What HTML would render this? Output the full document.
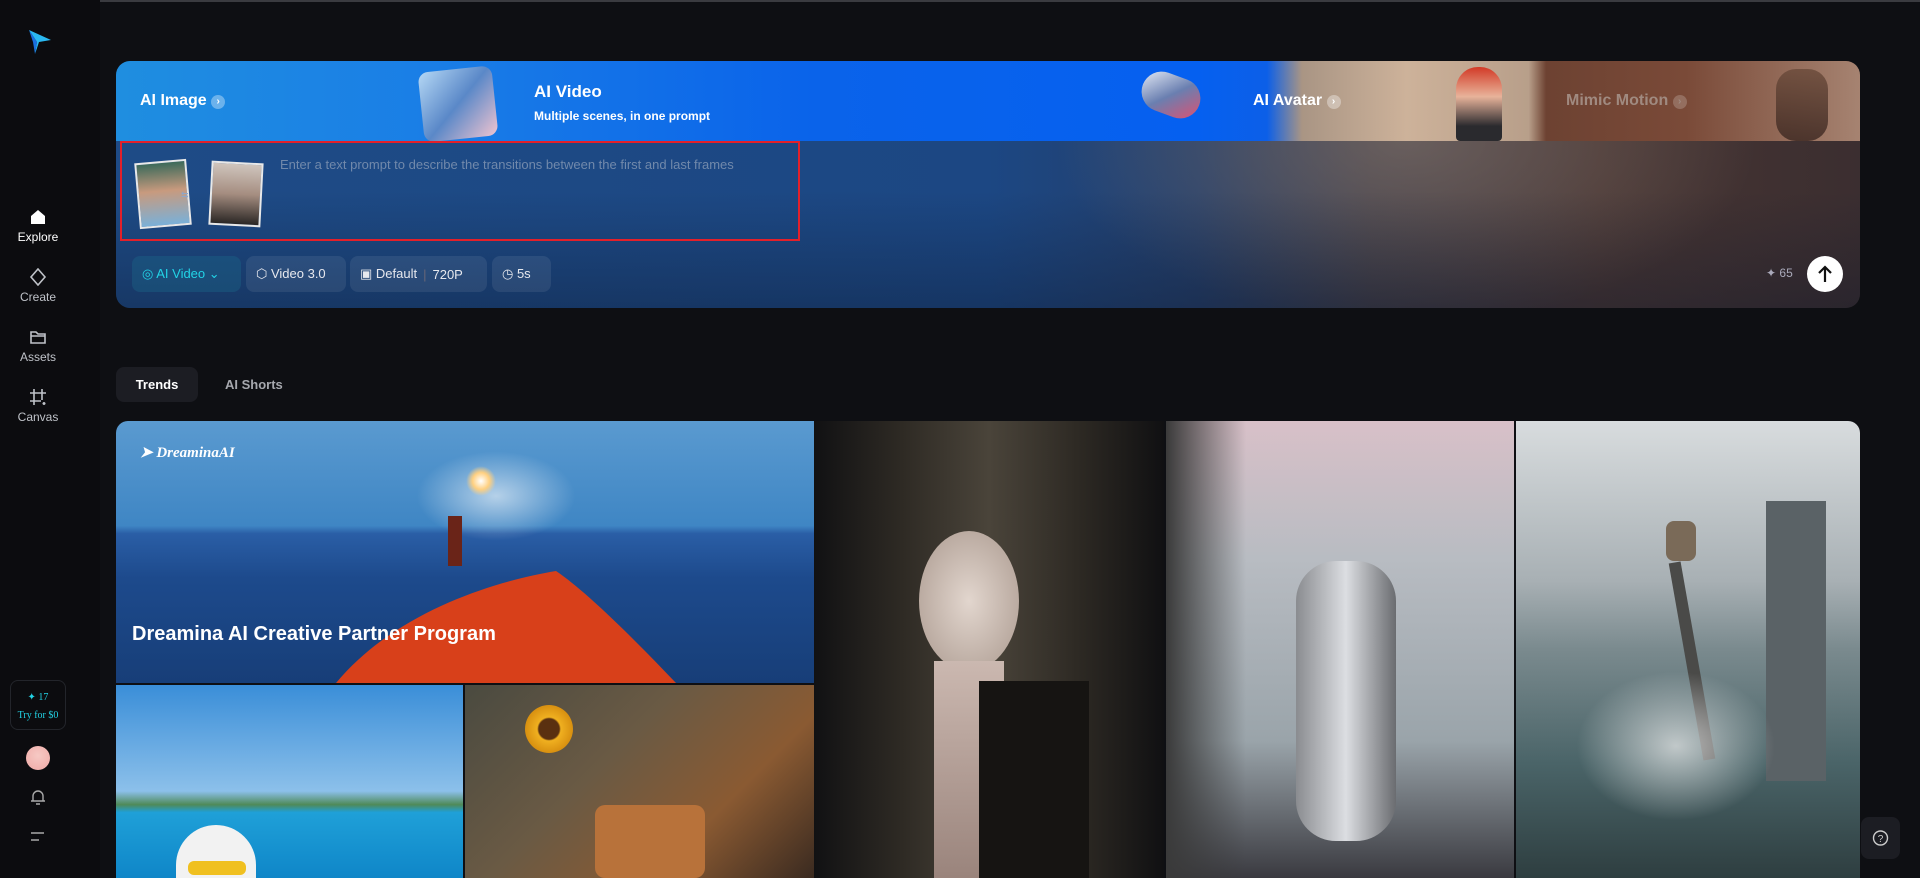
<!DOCTYPE html>
<html><head><meta charset="utf-8">
<style>
*{margin:0;padding:0;box-sizing:border-box}
body{width:1920px;height:878px;overflow:hidden;background:#0e0f13;font-family:"Liberation Sans",sans-serif;color:#fff;position:relative}
.abs{position:absolute}
.side{left:0;top:0;width:100px;height:878px;background:#0c0c0f}
.nav{position:absolute;left:0;width:76px;text-align:center;font-size:12px;color:#bfc2c8}
.nav svg{display:block;margin:0 auto 4px}
.card{left:116px;top:61px;width:1744px;height:247px;border-radius:14px;overflow:hidden}
.pill{position:absolute;top:256px;height:36px;border-radius:8px;background:rgba(255,255,255,.08);font-size:13px;color:#e6e8ee;display:flex;align-items:center;padding:0 10px;gap:6px}
.tile{position:absolute;overflow:hidden}
</style></head><body>
<div class="abs" style="left:0;top:0;width:1920px;height:2px;background:#3a3b40"></div>
<div class="abs side"></div>
<svg class="abs" style="left:27px;top:28px" width="26" height="28" viewBox="0 0 26 28"><path d="M2 2 L24 12 L12 14 L8 26 L10 14 Z" fill="#2ab8f0"/><path d="M2 2 L10 14 L8 26 L6 14Z" fill="#1a6fe0"/></svg>
<div class="nav" style="top:208px;color:#fff"><svg width="18" height="18" viewBox="0 0 18 18"><path d="M2 8 L9 2 L16 8 V16 H2Z" fill="#fff"/></svg>Explore</div>
<div class="nav" style="top:268px"><svg width="18" height="18" viewBox="0 0 18 18"><path d="M9 1 L16 9 L9 17 L2 9Z" fill="none" stroke="#bfc2c8" stroke-width="1.6"/></svg>Create</div>
<div class="nav" style="top:328px"><svg width="18" height="18" viewBox="0 0 18 18"><path d="M2 4 H7 L9 6 H16 V15 H2Z M2 8 H16" fill="none" stroke="#bfc2c8" stroke-width="1.6"/></svg>Assets</div>
<div class="nav" style="top:388px"><svg width="18" height="18" viewBox="0 0 18 18"><path d="M5 1 V17 M13 1 V12 M1 5 H17 M1 13 H12 M15 14 V17 M13.5 15.5 H16.5" fill="none" stroke="#bfc2c8" stroke-width="1.6"/></svg>Canvas</div>
<div class="abs" style="left:10px;top:680px;width:56px;height:50px;border:1px solid #23252b;border-radius:8px;text-align:center;font-family:'Liberation Serif',serif;font-size:10px;color:#22d3e6;padding-top:8px;line-height:18px">✦ 17<br>Try for $0</div>
<div class="abs" style="left:26px;top:746px;width:24px;height:24px;border-radius:50%;background:radial-gradient(circle at 50% 40%,#f6c9c4,#f0a9a6)"></div>
<svg class="abs" style="left:29px;top:788px" width="18" height="18" viewBox="0 0 18 18"><path d="M4 13 V8 A5 5 0 0 1 14 8 V13 Z M2 13 H16 M7 16 H11" fill="none" stroke="#aaa" stroke-width="1.4"/></svg>
<svg class="abs" style="left:30px;top:830px" width="16" height="14" viewBox="0 0 16 14"><path d="M1 3 H14 M1 10 H9" stroke="#aaa" stroke-width="1.6"/></svg>

<div class="abs card">
 <div class="abs" style="left:0;top:0;width:1744px;height:80px;background:linear-gradient(90deg,#1f8ee0 0%,#1a7ee6 18%,#0a63ea 40%,#0560f0 62%,#0c5fe8 66%,#a99584 68%,#cdb29a 74%,#b89f8a 81%,#6d4232 82%,#7a4a38 90%,#a68371 100%)"></div>
 <div class="abs" style="left:305px;top:8px;width:74px;height:70px;border-radius:10px;background:linear-gradient(135deg,#b5d8f5,#5a88c8,#f0c4d0);transform:rotate(-6deg)"></div>
 <div class="abs" style="left:1025px;top:14px;width:60px;height:40px;background:linear-gradient(135deg,#e8eef8,#6a7fb0,#e05070);border-radius:20px;transform:rotate(20deg)"></div>
 <div class="abs" style="left:1340px;top:6px;width:46px;height:74px;border-radius:22px 22px 4px 4px;background:linear-gradient(180deg,#d23a26 0%,#e8b39a 40%,#2a2a2e 80%)"></div>
 <div class="abs" style="left:1660px;top:8px;width:52px;height:72px;border-radius:20px;background:linear-gradient(180deg,#6a4a3a,#3a2620);opacity:.8"></div>
 <div class="abs" style="left:24px;top:20px;font-size:16px;font-weight:bold;line-height:40px">AI Image <span style="display:inline-block;width:14px;height:14px;border-radius:50%;background:rgba(255,255,255,.35);font-size:10px;line-height:14px;text-align:center;vertical-align:1px">›</span></div>
 <div class="abs" style="left:418px;top:21px;font-size:17px;font-weight:bold">AI Video</div>
 <div class="abs" style="left:418px;top:48px;font-size:12px;font-weight:bold">Multiple scenes, in one prompt</div>
 <div class="abs" style="left:1137px;top:20px;font-size:16px;font-weight:bold;line-height:40px">AI Avatar <span style="display:inline-block;width:14px;height:14px;border-radius:50%;background:rgba(255,255,255,.35);font-size:10px;line-height:14px;text-align:center;vertical-align:1px">›</span></div>
 <div class="abs" style="left:1450px;top:20px;font-size:16px;font-weight:bold;line-height:40px;color:#a08a80">Mimic Motion <span style="display:inline-block;width:14px;height:14px;border-radius:50%;background:rgba(255,255,255,.2);font-size:10px;line-height:14px;text-align:center;vertical-align:1px">›</span></div>
 <div class="abs" style="left:0;top:80px;width:1744px;height:167px;background:radial-gradient(ellipse 500px 260px at 1290px 0,rgba(140,125,115,.55),rgba(0,0,0,0) 70%),linear-gradient(90deg,#1e4b86 0%,#1c4783 50%,#253f6a 62%,#3d3a45 72%,#473533 85%,#3b2e30 100%)"></div>
 <div class="abs" style="left:0;top:80px;width:1744px;height:167px;background:linear-gradient(180deg,rgba(0,0,0,0) 30%,rgba(10,20,40,.35))"></div>
</div>
<div class="abs" style="left:120px;top:141px;width:680px;height:100px;border:2px solid #e3202a"></div>
<div class="abs" style="left:137px;top:161px;width:52px;height:66px;border:2px solid #e8e8e8;background:linear-gradient(180deg,#3c6a5a,#c89a7e 45%,#7ab0d8);transform:rotate(-5deg)"></div>
<div class="abs" style="left:181px;top:190px;font-size:9px;color:#8fa6c8">⇆</div>
<div class="abs" style="left:210px;top:162px;width:52px;height:64px;border:2px solid #e8e8e8;background:linear-gradient(180deg,#cfc5bd,#a58d80 50%,#2a2624);transform:rotate(3deg)"></div>
<div class="abs" style="left:280px;top:157px;font-size:13px;color:#7189ab">Enter a text prompt to describe the transitions between the first and last frames</div>

<div class="pill" style="left:132px;width:109px;background:rgba(30,110,140,.35);color:#22d3e6">◎ AI Video ⌄</div>
<div class="pill" style="left:246px;width:100px">⬡ Video 3.0</div>
<div class="pill" style="left:350px;width:137px">▣ Default <span style="color:#667">|</span> 720P</div>
<div class="pill" style="left:492px;width:59px">◷ 5s</div>
<div class="abs" style="left:1766px;top:266px;font-size:12px;color:#aab">✦ 65</div>
<div class="abs" style="left:1807px;top:256px;width:36px;height:36px;border-radius:50%;background:#fff"><svg width="36" height="36" viewBox="0 0 36 36"><path d="M18 26 V11 M12 17 L18 11 L24 17" fill="none" stroke="#111" stroke-width="2.2"/></svg></div>

<div class="abs" style="left:116px;top:367px;width:82px;height:35px;border-radius:8px;background:#1c1d23;font-size:13px;font-weight:bold;line-height:35px;text-align:center">Trends</div>
<div class="abs" style="left:225px;top:367px;font-size:13px;font-weight:bold;line-height:35px;color:#a6a8ae">AI Shorts</div>

<div class="tile" style="left:116px;top:421px;width:698px;height:262px;border-radius:12px 0 0 0;background:linear-gradient(180deg,#5a9ad0 0%,#3f86c4 40%,#2a5ea6 43%,#1d4a8c 60%,#173e78 100%)">
 <div class="abs" style="left:300px;top:30px;width:160px;height:90px;background:radial-gradient(ellipse,rgba(255,255,255,.6),rgba(255,255,255,0) 70%)"></div>
 <div class="abs" style="left:350px;top:45px;width:30px;height:30px;background:radial-gradient(circle,#fff,#ffd080 40%,rgba(255,200,100,0) 70%)"></div>
 <div class="abs" style="left:332px;top:95px;width:14px;height:50px;background:#6a2418"></div>
 <svg class="abs" style="left:0;top:0" width="698" height="262"><path d="M220 262 C280 190 380 160 440 150 C470 170 520 220 560 262Z" fill="#d8401a"/></svg>
 <div class="abs" style="left:24px;top:22px;font-family:'Liberation Serif',serif;font-style:italic;font-weight:bold;font-size:15px">➤ DreaminaAI</div>
 <div class="abs" style="left:16px;top:202px;font-size:20px;font-weight:bold">Dreamina AI Creative Partner Program</div>
</div>
<div class="tile" style="left:116px;top:685px;width:347px;height:193px;background:linear-gradient(180deg,#3a8ed8 0%,#8cc0ea 55%,#4f8a58 62%,#1fa0d8 66%,#0f86c8 100%)">
 <div class="abs" style="left:60px;top:140px;width:80px;height:60px;border-radius:40px 40px 0 0;background:#f2f2f2"></div>
 <div class="abs" style="left:72px;top:176px;width:58px;height:14px;background:#f0c020;border-radius:6px"></div>
</div>
<div class="tile" style="left:465px;top:685px;width:349px;height:193px;background:linear-gradient(135deg,#4a4a40,#6a5a44 40%,#8a5a32 70%,#3a2a20)">
 <div class="abs" style="left:60px;top:20px;width:48px;height:48px;border-radius:50%;background:radial-gradient(circle,#5a3010 30%,#f0b020 35%,#d89010 70%)"></div>
 <div class="abs" style="left:130px;top:120px;width:110px;height:73px;background:#b8723a;border-radius:10px"></div>
</div>
<div class="tile" style="left:814px;top:421px;width:350px;height:457px;background:linear-gradient(90deg,#111113 0%,#2e2a24 25%,#4a443a 50%,#2e2a24 75%,#101012 100%)">
 <div class="abs" style="left:105px;top:110px;width:100px;height:140px;border-radius:50%;background:radial-gradient(ellipse,#e2d6ce,#b8a89e 75%)"></div>
 <div class="abs" style="left:120px;top:240px;width:70px;height:217px;background:linear-gradient(180deg,#cbb8b0,#9a847c)"></div>
 <div class="abs" style="left:165px;top:260px;width:110px;height:197px;background:#161412"></div>
</div>
<div class="tile" style="left:1166px;top:421px;width:348px;height:457px;background:linear-gradient(180deg,#d8c0c8 0%,#b8bcc2 30%,#9aa4aa 70%,#3a3a40 100%)">
 <div class="abs" style="left:0;top:0;width:80px;height:457px;background:linear-gradient(90deg,#3a3a3a,rgba(60,60,60,0))"></div>
 <div class="abs" style="left:130px;top:140px;width:100px;height:280px;border-radius:40px;background:linear-gradient(90deg,#8a8c90,#dcdee2,#6a6c70)"></div>
</div>
<div class="tile" style="left:1516px;top:421px;width:344px;height:457px;border-radius:0 12px 0 0;background:linear-gradient(180deg,#d8dcde 0%,#a8b0b4 35%,#7a8a8e 50%,#4a6468 75%,#2e3e40 100%)">
 <div class="abs" style="left:150px;top:100px;width:30px;height:40px;background:#7a6a58;border-radius:8px"></div>
 <div class="abs" style="left:170px;top:140px;width:12px;height:200px;background:#4a4a48;transform:rotate(-10deg)"></div>
 <div class="abs" style="left:250px;top:80px;width:60px;height:280px;background:#5a6266"></div>
 <div class="abs" style="left:60px;top:250px;width:200px;height:150px;border-radius:50%;background:radial-gradient(ellipse,rgba(240,240,240,.7),rgba(240,240,240,0) 70%)"></div>
</div>
<div class="abs" style="left:1861px;top:817px;width:39px;height:42px;border-radius:8px;background:#1c1d23"><svg width="39" height="42" viewBox="0 0 39 42"><circle cx="19.5" cy="21" r="7" fill="none" stroke="#ccc" stroke-width="1.4"/><text x="19.5" y="25" font-size="10" fill="#ccc" text-anchor="middle" font-family="Liberation Sans">?</text></svg></div>
</body></html>
